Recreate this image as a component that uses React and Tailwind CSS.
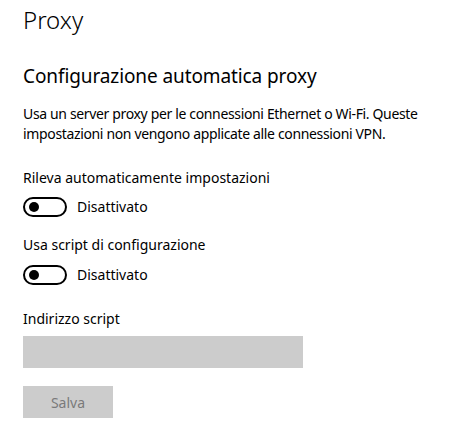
import React from 'react';

function Toggle() {
  return (
    <div className="flex items-center">
      <span className="w-[44px] h-[20px] rounded-full border-2 border-black flex items-center pl-[4px]">
        <span className="w-[10px] h-[10px] rounded-full bg-black" />
      </span>
      <span className="ml-[10px] text-[14px] leading-[20px]">Disattivato</span>
    </div>
  );
}

export default function App() {
  return (
    <div
      className="w-[452px] h-[430px] bg-white text-black pl-[23px] pt-[3px]"
      style={{ fontFamily: '"Segoe UI", "Noto Sans", sans-serif' }}
    >
      <h1 className="text-[24px] leading-[34px] font-light">Proxy</h1>

      <h2 className="mt-[26px] text-[19px] leading-[26px] tracking-[-0.1px]">Configurazione automatica proxy</h2>

      <p className="mt-[15px] text-[14px] leading-[20px] tracking-[-0.35px] w-[428px]">
        Usa un server proxy per le connessioni Ethernet o Wi-Fi. Queste impostazioni non vengono applicate alle connessioni VPN.
      </p>

      <p className="mt-[24px] text-[14px] leading-[20px]">Rileva automaticamente impostazioni</p>
      <div className="mt-[9px]">
        <Toggle />
      </div>

      <p className="mt-[18px] text-[14px] leading-[20px]">Usa script di configurazione</p>
      <div className="mt-[10px]">
        <Toggle />
      </div>

      <p className="mt-[24px] text-[14px] leading-[20px]">Indirizzo script</p>
      <div className="mt-[7px] w-[280px] h-[32px] bg-[#cccccc]" />

      <button className="block mt-[18px] w-[90px] h-[32px] bg-[#cccccc] text-[#7a7a7a] text-[14px]">
        Salva
      </button>
    </div>
  );
}
